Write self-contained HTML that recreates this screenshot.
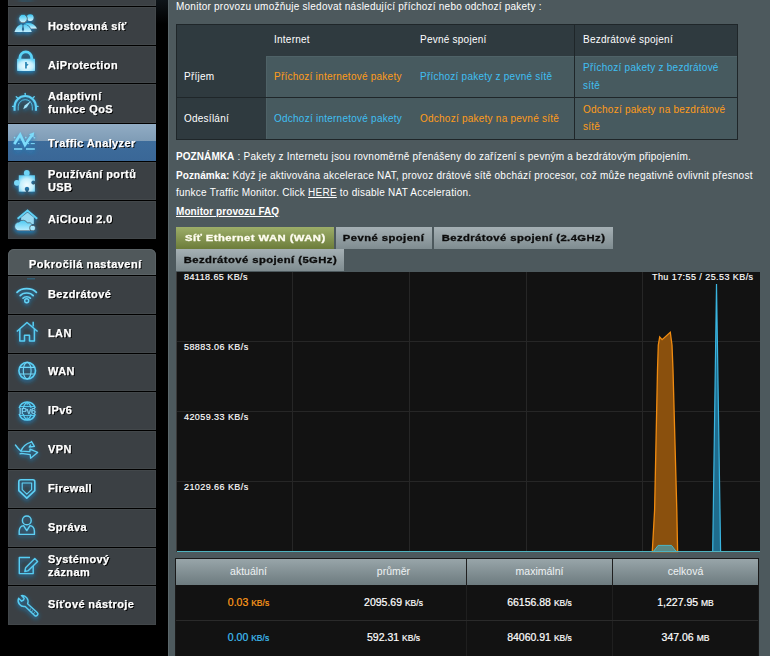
<!DOCTYPE html>
<html><head><meta charset="utf-8">
<style>
*{margin:0;padding:0;box-sizing:border-box}
html,body{width:770px;height:656px;overflow:hidden;background:#000;font-family:"Liberation Sans",sans-serif}
.abs{position:absolute}
/* sidebar */
.mi{position:absolute;left:8px;width:148px;background:#3b4044;box-shadow:inset 0 0 0 1px #42474a}
.mi .t{position:absolute;left:40px;color:#fff;font-weight:bold;font-size:10px;letter-spacing:0.35px;text-shadow:1px 1px 0 #000;line-height:13px;white-space:nowrap;transform:scaleX(1.1);transform-origin:0 0;-webkit-text-stroke:0.25px #fff}
.mi svg{position:absolute;left:4px;overflow:visible}
.act{background:linear-gradient(#91acc4 0%,#7f9cb6 46%,#3d6c9b 47%,#3a6797 100%);box-shadow:none}
.hdr{position:absolute;left:8px;width:148px;top:249px;height:26px;background:#50585b;border-radius:6px 6px 0 0;box-shadow:inset 0 0 0 1px #5a6265}
.hdr .t{position:absolute;left:20.5px;top:9px;color:#fff;font-weight:bold;font-size:10px;letter-spacing:0.45px;text-shadow:1px 1px 0 #000;white-space:nowrap;line-height:13px;transform:scaleX(1.1);transform-origin:0 0;-webkit-text-stroke:0.25px #fff}
/* content */
#content{position:absolute;left:168px;top:0;width:602px;height:656px;background:#4d595d;border-left:1px solid #5b676b}
.txt{position:absolute;color:#fff;font-size:10px;letter-spacing:0.24px;white-space:nowrap;line-height:13px}
.txt b{letter-spacing:0.08px}
.or{color:#ff9c1a}
.bl{color:#3fbff2}

.tab{position:absolute;height:22px;background:linear-gradient(#a5b0b4,#7f8c90);color:#0c0c0c;font-weight:bold;font-size:9px;letter-spacing:0.35px;line-height:23px;text-align:center;white-space:nowrap}
.tab span{display:inline-block;transform:scaleX(1.25);-webkit-text-stroke:0.3px currentColor}
.tab.on{background:linear-gradient(#9dae69,#6c7c3a);color:#fffdf0}
.clab{position:absolute;color:#fff;font-size:9px;letter-spacing:0.43px;line-height:13px;white-space:nowrap;-webkit-text-stroke:0.15px #fff;margin-top:1px}
.sh{position:absolute;top:558px;height:26px;line-height:26px;text-align:center;color:#eef2f3;font-size:10.5px}
.sv{position:absolute;height:14px;line-height:14px;text-align:center;color:#fff;font-size:10.5px;-webkit-text-stroke:0.2px currentColor}
.sv small{font-size:8.5px}
</style></head><body>

<!-- sidebar -->
<div class="mi" style="top:-33px;height:39px"></div>
<div class="mi" style="top:7px;height:38px"><div class="t" style="top:13px">Hostovaná síť</div></div>
<div class="mi" style="top:46px;height:37px"><div class="t" style="top:13px">AiProtection</div></div>
<div class="mi" style="top:84px;height:39px"><div class="t" style="top:7px;line-height:12.5px">Adaptivní<br>funkce QoS</div></div>
<div class="mi act" style="top:124px;height:37px"><div class="t" style="top:13px">Traffic Analyzer</div></div>
<div class="mi" style="top:162px;height:38px"><div class="t" style="top:7px;line-height:12.5px">Používání portů<br>USB</div></div>
<div class="mi" style="top:201px;height:38px"><div class="t" style="top:12px">AiCloud 2.0</div></div>

<div class="hdr"><div class="t">Pokročilá nastavení</div></div>
<div class="mi" style="top:276px;height:38px"><div class="t" style="top:12px">Bezdrátové</div></div>
<div class="mi" style="top:315px;height:38px"><div class="t" style="top:12px">LAN</div></div>
<div class="mi" style="top:354px;height:37px"><div class="t" style="top:11px">WAN</div></div>
<div class="mi" style="top:392px;height:38px"><div class="t" style="top:12px">IPv6</div></div>
<div class="mi" style="top:431px;height:38px"><div class="t" style="top:12px">VPN</div></div>
<div class="mi" style="top:470px;height:38px"><div class="t" style="top:12px">Firewall</div></div>
<div class="mi" style="top:509px;height:38px"><div class="t" style="top:12px">Správa</div></div>
<div class="mi" style="top:548px;height:37px"><div class="t" style="top:6px;line-height:12.5px">Systémový<br>záznam</div></div>
<div class="mi" style="top:586px;height:39px"><div class="t" style="top:12px">Síťové nástroje</div></div>


<!-- icons -->
<svg class="abs" style="left:0;top:0" width="160" height="656" viewBox="0 0 160 656">
<defs>
 <filter id="gl" x="-60%" y="-60%" width="220%" height="220%">
  <feGaussianBlur in="SourceAlpha" stdDeviation="2" result="b"/>
  <feOffset in="b" dy="1.5" result="o"/>
  <feFlood flood-color="#1a88cc" flood-opacity="0.95"/>
  <feComposite in2="o" operator="in" result="g"/>
  <feMerge><feMergeNode in="g"/><feMergeNode in="SourceGraphic"/></feMerge>
 </filter>
 <linearGradient id="fg" x1="0" y1="0" x2="0" y2="1">
  <stop offset="0" stop-color="#34c3f2"/><stop offset="1" stop-color="#d6f6ff"/>
 </linearGradient>
 <linearGradient id="fg2" x1="0" y1="0" x2="0" y2="1">
  <stop offset="0" stop-color="#4cc9f3"/><stop offset="1" stop-color="#bfeefe"/>
 </linearGradient>
 <radialGradient id="rg" cx="0.5" cy="0.6" r="0.65">
  <stop offset="0" stop-color="#f2fcff"/><stop offset="0.6" stop-color="#c4effd"/><stop offset="1" stop-color="#62d0f6"/>
 </radialGradient>
 <mask id="pm" maskUnits="userSpaceOnUse" x="0" y="160" width="50" height="40">
  <rect x="0" y="160" width="50" height="40" fill="#fff"/>
  <circle cx="33.3" cy="182.6" r="2.1" fill="#000"/>
  <circle cx="27" cy="189" r="2.3" fill="#000"/>
  <rect x="25.9" y="189" width="2.2" height="4" fill="#000"/>
 </mask>
</defs>
<g filter="url(#gl)">
 <!-- top partial icon glow -->
 <ellipse cx="26" cy="-1" rx="8" ry="1" fill="#1d6f9a" opacity="0.5"/>
</g>
<rect x="27" y="278.2" width="8" height="1.2" fill="#2b7399" opacity="0.7"/>
<!-- people -->
<g filter="url(#gl)">
 <circle cx="30.2" cy="17.6" r="3.4" fill="url(#fg)"/>
 <path d="M25.5,23.2 Q34,22 37,28.6 L31,28.6 Q29,24.5 25.5,24.5Z" fill="url(#fg)"/>
 <circle cx="23" cy="18.6" r="4.3" fill="url(#fg)" stroke="#3b4044" stroke-width="0.7"/>
 <path d="M14.5,32 Q16.5,25.5 21.3,24.2 L22.6,25.5 L21.8,29.5 L23,32 L24.2,29.5 L23.4,25.5 L24.7,24.2 Q29.5,25.5 31.8,32Z" fill="url(#fg2)"/>
</g>
<!-- lock -->
<g filter="url(#gl)">
 <path d="M19.9,59.5 V57.8 A5.9,5.9 0 0 1 31.7,57.8 V59.5" fill="none" stroke="#5ad3f8" stroke-width="2.8"/>
 <rect x="17.1" y="58.8" width="17.9" height="12.1" rx="0.6" fill="url(#rg)"/>
 <path d="M25.1,62 h1.7 v1.6 l1.9,1.2 l-1.9,1.2 v2.5 h-1.7z" fill="#2a86b4"/>
</g>
<!-- gauge -->
<g filter="url(#gl)">
 <path d="M14.55,110.8 V106.7 A10.7,10.7 0 0 1 35.95,106.7 V110.8" fill="none" stroke="#5dd0f6" stroke-width="2.1"/>
 <path d="M18.2,110.4 V106.7 A7.05,7.05 0 0 1 32.3,106.7 V110.4" fill="none" stroke="#4fc6ee" stroke-width="0.9"/>
 <g stroke="#5dd0f6" stroke-width="1.3" stroke-linecap="round">
  <line x1="25.25" y1="93.3" x2="25.25" y2="95.4"/>
  <line x1="16.2" y1="96.6" x2="17.4" y2="97.8"/>
  <line x1="34.3" y1="96.6" x2="33.1" y2="97.8"/>
  <line x1="12.6" y1="106.4" x2="14" y2="106.4"/>
  <line x1="38" y1="106.4" x2="36.6" y2="106.4"/>
 </g>
 <path d="M23.2,109.2 L24.6,105.6 L30.9,101.1 L26.8,107.2 Z" fill="#9fe5fc"/>
</g>
<!-- traffic analyzer -->
<g filter="url(#gl)">
 <path d="M14.3,144 L20.2,134.6 L25,145 L31.5,135.8" fill="none" stroke="#7cdcfb" stroke-width="2.6" stroke-linejoin="miter"/>
 <path d="M29,134.2 L34.2,132.3 L33.4,137.6Z" fill="#7cdcfb"/>
 <path d="M14,143.6 h1.5 M18,143.6 h1.5 M27.6,143.6 h1.5 M30.8,143.6 h4" stroke="#7cdcfb" stroke-width="1"/>
 <path d="M14,149 h8.2 M26,149 h8.8" stroke="#7cdcfb" stroke-width="1.3"/>
 <circle cx="14.6" cy="137.6" r="0.8" fill="#7cdcfb"/><circle cx="25.8" cy="137.6" r="0.8" fill="#7cdcfb"/><circle cx="34.4" cy="137.8" r="0.8" fill="#7cdcfb"/>
</g>
<!-- puzzle -->
<g filter="url(#gl)">
 <g mask="url(#pm)">
  <rect x="18.8" y="175.3" width="16.1" height="16.3" fill="url(#rg)"/>
  <circle cx="26.8" cy="172.9" r="2.9" fill="#6ed5f7"/>
  <circle cx="16.9" cy="182.8" r="2.9" fill="#7ad9f8"/>
 </g>
</g>
<!-- aicloud -->
<g filter="url(#gl)">
 <path d="M21.2,217.5 L27.5,212.6 L33.8,217.5 V224 H21.2Z" fill="#9fe3fa" opacity="0.9"/>
 <path d="M17.6,218.8 L27.5,210.6 L37.2,218.8" fill="none" stroke="#5fd2f7" stroke-width="1.9"/>
 <path d="M19,230.8 A4.4,4.4 0 0 1 19,222 A5,4.8 0 0 1 27.4,223 A3.9,3.9 0 0 1 29.8,230.8 Z" fill="url(#fg2)" stroke="#3b4044" stroke-width="0.6"/>
 <rect x="29.8" y="225.4" width="5.6" height="5.4" rx="2" fill="#a6e7fc" stroke="#3b4044" stroke-width="0.7"/>
</g>
<!-- wifi -->
<g filter="url(#gl)" fill="none" stroke="#62d3f7" stroke-width="1.7" stroke-linecap="round">
 <path d="M17,292.4 A11.5,8 0 0 1 36.4,292.4"/>
 <path d="M20.2,295.6 A7.5,5.2 0 0 1 33.2,295.6"/>
 <path d="M23,298.2 A4.3,3 0 0 1 30.4,298.2"/>
 <circle cx="26.7" cy="300.8" r="2" stroke-width="1.4"/>
</g>
<!-- lan house -->
<g filter="url(#gl)" fill="none" stroke="#56cdf4" stroke-width="1.5" stroke-linejoin="round">
 <path d="M16.8,331.5 L27,322.5 L37.6,331.5"/>
 <path d="M19.8,329 V341 H24.5 V335.2 H29.5 V341 H34.4 V329"/>
 <path d="M33.2,326.5 V321.8"/>
</g>
<!-- globe -->
<g filter="url(#gl)" fill="none" stroke="#6dd6f8" stroke-width="1.3">
 <circle cx="27.2" cy="370.7" r="8.3" stroke="#58cff6" stroke-width="1.6"/>
 <ellipse cx="27.2" cy="370.7" rx="3.9" ry="8.3" stroke-width="1.1"/>
 <path d="M19.6,367.4 H34.8 M19.6,374 H34.8" stroke-width="1.1"/>
</g>
<!-- ipv6 -->
<g filter="url(#gl)">
 <g fill="none" stroke="#58cff6" stroke-width="1.1">
  <path d="M19.2,408 A8.3,8.3 0 0 1 35.2,408 M19.2,414 A8.3,8.3 0 0 0 35.2,414" stroke-width="1.5"/>
  <path d="M23.3,408 Q24.5,403 27.2,402.6 Q29.9,403 31.1,408 M23.3,414 Q24.5,419 27.2,419.2 Q29.9,419 31.1,414"/>
  <path d="M27.2,402.6 V405 M27.2,416.5 V419.2 M20,406.5 H34.4 M20,415.5 H34.4" stroke-width="0.9"/>
 </g>
 <text x="27.3" y="414.2" text-anchor="middle" font-family="Liberation Sans" font-size="8.6" fill="#7ad6f7" letter-spacing="-0.2" stroke="#7ad6f7" stroke-width="0.25">IPv6</text>
</g>
<!-- vpn -->
<g filter="url(#gl)" fill="none" stroke="#5dd0f5" stroke-width="1.3" stroke-linejoin="round" stroke-linecap="round">
 <path d="M15.4,445 Q18,448.6 21,451.2 L29.8,451.6 L30,449.2 L37.6,452.4 L30.6,458.2 L30.2,454.6 L21.4,453.4 L20,453.8"/>
 <path d="M21,451 Q23.5,444.5 31.2,442.2 L31.4,441.4 L34.4,446.4 L29.2,447 L30.6,445"/>
</g>
<!-- shield -->
<g filter="url(#gl)" fill="none" stroke="#5dd0f5" stroke-linejoin="round">
 <path d="M21,479.8 H32.8 Q34.8,479.8 34.8,481.8 V490.6 L26.8,498.2 L18.8,490.6 V481.8 Q18.8,479.8 21,479.8 Z" stroke-width="1.6"/>
 <path d="M22.2,483 H31.6 V489.6 L26.8,494.2 L22.2,489.6 Z" stroke-width="1.1"/>
</g>
<!-- person -->
<g filter="url(#gl)" fill="none" stroke="#5dd0f5" stroke-width="1.4" stroke-linejoin="round">
 <circle cx="26.8" cy="520.4" r="4.4"/>
 <path d="M19.2,534.4 V531 Q19.6,526 23.6,525.6 L26.8,530.6 L30,525.6 Q34,526 34.4,531 V534.4 Z"/>
</g>
<!-- log -->
<g filter="url(#gl)" fill="none" stroke="#56cdf4" stroke-width="1.4" stroke-linejoin="round">
 <path d="M30,557.5 H19.3 V573.6 H33.2 V566"/>
 <path d="M24.8,571.6 L25.6,567.8 L34.8,558.6 L37.6,561.4 L28.4,570.6 Z"/>
</g>
<!-- wrench -->
<g filter="url(#gl)" fill="none" stroke="#56cdf4" stroke-width="1.4" stroke-linejoin="round" stroke-linecap="round">
 <path d="M18.6,598.2 L21.6,601.2 L23.4,600.2 L24.2,598.2 L21.4,595.6 A6,6 0 0 1 27.6,603.8 L37.2,612.6 A1.9,1.9 0 0 1 34.6,615.4 L25.2,606.4 A6,6 0 0 1 18.6,598.2 Z"/>
 <path d="M30.6,609 l-1.2,1.2 M32.6,610.8 l-1.2,1.2 M34.6,612.6 l-1.2,1.2" stroke-width="0.9"/>
</g>
</svg>

<!-- content -->
<div class="abs" style="left:156px;top:0;width:12px;height:24px;background:linear-gradient(#0e1419,#000)"></div>
<div id="content"></div>

<div class="txt" style="left:176px;top:0px">Monitor provozu umožňuje sledovat následující příchozí nebo odchozí pakety :</div>

<!-- intro table -->
<div class="abs" style="left:176px;top:24px;width:562px;height:116px;background:#2f3a3f;border:1px solid #1f2629"></div>
<div class="abs" style="left:266px;top:56px;width:471px;height:83px;background:#475a5f;box-shadow:inset 1px 1px 0 #4f6267"></div>
<div class="abs" style="left:177px;top:97px;width:560px;height:1px;background:#1f2629"></div>
<div class="abs" style="left:574px;top:25px;width:1px;height:114px;background:#1f2629"></div>
<div class="txt" style="left:274px;top:33px">Internet</div>
<div class="txt" style="left:420px;top:33px">Pevné spojení</div>
<div class="txt" style="left:583px;top:33px">Bezdrátové spojení</div>
<div class="txt" style="left:184px;top:70px">Příjem</div>
<div class="txt" style="left:184px;top:112px">Odesílání</div>
<div class="txt or" style="left:274px;top:70px">Příchozí internetové pakety</div>
<div class="txt bl" style="left:420px;top:70px">Příchozí pakety z pevné sítě</div>
<div class="txt bl" style="left:583px;top:61px">Příchozí pakety z bezdrátové</div>
<div class="txt bl" style="left:583px;top:79px">sítě</div>
<div class="txt bl" style="left:274px;top:112px">Odchozí internetové pakety</div>
<div class="txt or" style="left:420px;top:112px">Odchozí pakety na pevné sítě</div>
<div class="txt or" style="left:583px;top:103px">Odchozí pakety na bezdrátové</div>
<div class="txt or" style="left:583px;top:120px">sítě</div>

<!-- notes -->
<div class="txt" style="left:176px;top:150px"><b>POZNÁMKA</b> : Pakety z Internetu jsou rovnoměrně přenášeny do zařízení s pevným a bezdrátovým připojením.</div>
<div class="txt" style="left:176px;top:169px"><b>Poznámka:</b> Když je aktivována akcelerace NAT, provoz drátové sítě obchází procesor, což může negativně ovlivnit přesnost</div>
<div class="txt" style="left:176px;top:186px">funkce Traffic Monitor. Click <u>HERE</u> to disable NAT Acceleration.</div>
<div class="txt" style="left:176px;top:205px"><b><u>Monitor provozu FAQ</u></b></div>

<!-- tabs -->
<div class="tab on" style="left:176px;top:227px;width:158px"><span>Síť Ethernet WAN (WAN)</span></div>
<div class="tab" style="left:336px;top:227px;width:96px"><span>Pevné spojení</span></div>
<div class="tab" style="left:434px;top:227px;width:179px"><span>Bezdrátové spojení (2.4GHz)</span></div>
<div class="tab" style="left:176px;top:249px;width:168px"><span>Bezdrátové spojení (5GHz)</span></div>

<!-- chart -->
<div class="abs" style="left:176px;top:272px;width:584px;height:280px;background:#121212;border-left:1px solid #3a3a3a"></div>
<svg class="abs" style="left:0;top:0" width="770" height="656" viewBox="0 0 770 656">
  <g stroke="#262626" stroke-width="1">
    <line x1="177" y1="341.5" x2="760" y2="341.5"/>
    <line x1="177" y1="411.5" x2="760" y2="411.5"/>
    <line x1="177" y1="481.5" x2="760" y2="481.5"/>
    <line x1="292.5" y1="272" x2="292.5" y2="551"/>
    <line x1="409.5" y1="272" x2="409.5" y2="551"/>
    <line x1="526.5" y1="272" x2="526.5" y2="551"/>
    <line x1="642.5" y1="272" x2="642.5" y2="551"/>
  </g>
  <path d="M652.3,551.5 L654.6,510 L657.5,370 L658.3,345 L659.7,337 L662.1,339.7 L670.3,332.2 L672,345 L673,370 L676.8,510 L677.6,551.5 Z" fill="#8a500d" stroke="#f08b10" stroke-width="1.3"/>
  <path d="M653.4,551.5 L658.1,545.4 L671.5,545.4 L676.2,551.5 Z" fill="#5b8a84" stroke="#4ab8c8" stroke-width="1"/>
  <path d="M712.7,551.5 L716.5,284 L720.6,551.5 Z" fill="#1f6c8d" stroke="#3ab5e0" stroke-width="1.2"/>
  <line x1="177" y1="551.5" x2="760" y2="551.5" stroke="#4fb3bf" stroke-width="1"/>
</svg>
<div class="clab" style="left:184px;top:270px">84118.65 KB/s</div>
<div class="clab" style="left:184px;top:340px">58883.06 KB/s</div>
<div class="clab" style="left:184px;top:410px">42059.33 KB/s</div>
<div class="clab" style="left:184px;top:480px">21029.66 KB/s</div>
<div class="clab" style="left:652px;top:270px">Thu 17:55 / 25.53 KB/s</div>

<!-- stats -->
<div class="abs" style="left:175px;top:558px;width:584px;height:98px;background:#121212;border:1px solid #1a1a1a;border-bottom:none"></div>
<div class="abs" style="left:176px;top:559px;width:582px;height:26px;background:linear-gradient(#98a5a9,#6d7b7f)"></div>
<div class="abs" style="left:466px;top:559px;width:1px;height:97px;background:#1f1f1f"></div>
<div class="abs" style="left:612px;top:559px;width:1px;height:97px;background:#1f1f1f"></div>
<div class="abs" style="left:176px;top:620px;width:582px;height:1px;background:#2a2a2a"></div>
<div class="sh" style="left:176px;width:145px">aktuální</div>
<div class="sh" style="left:321px;width:145px">průměr</div>
<div class="sh" style="left:467px;width:145px">maximální</div>
<div class="sh" style="left:613px;width:145px">celková</div>
<div class="sv" style="left:176px;width:145px;top:595px"><span class="or">0.03 <small>KB/s</small></span></div>
<div class="sv" style="left:321px;width:145px;top:595px">2095.69 <small>KB/s</small></div>
<div class="sv" style="left:467px;width:145px;top:595px">66156.88 <small>KB/s</small></div>
<div class="sv" style="left:613px;width:145px;top:595px">1,227.95 <small>MB</small></div>
<div class="sv" style="left:176px;width:145px;top:630px"><span class="bl">0.00 <small>KB/s</small></span></div>
<div class="sv" style="left:321px;width:145px;top:630px">592.31 <small>KB/s</small></div>
<div class="sv" style="left:467px;width:145px;top:630px">84060.91 <small>KB/s</small></div>
<div class="sv" style="left:613px;width:145px;top:630px">347.06 <small>MB</small></div>

</body></html>
